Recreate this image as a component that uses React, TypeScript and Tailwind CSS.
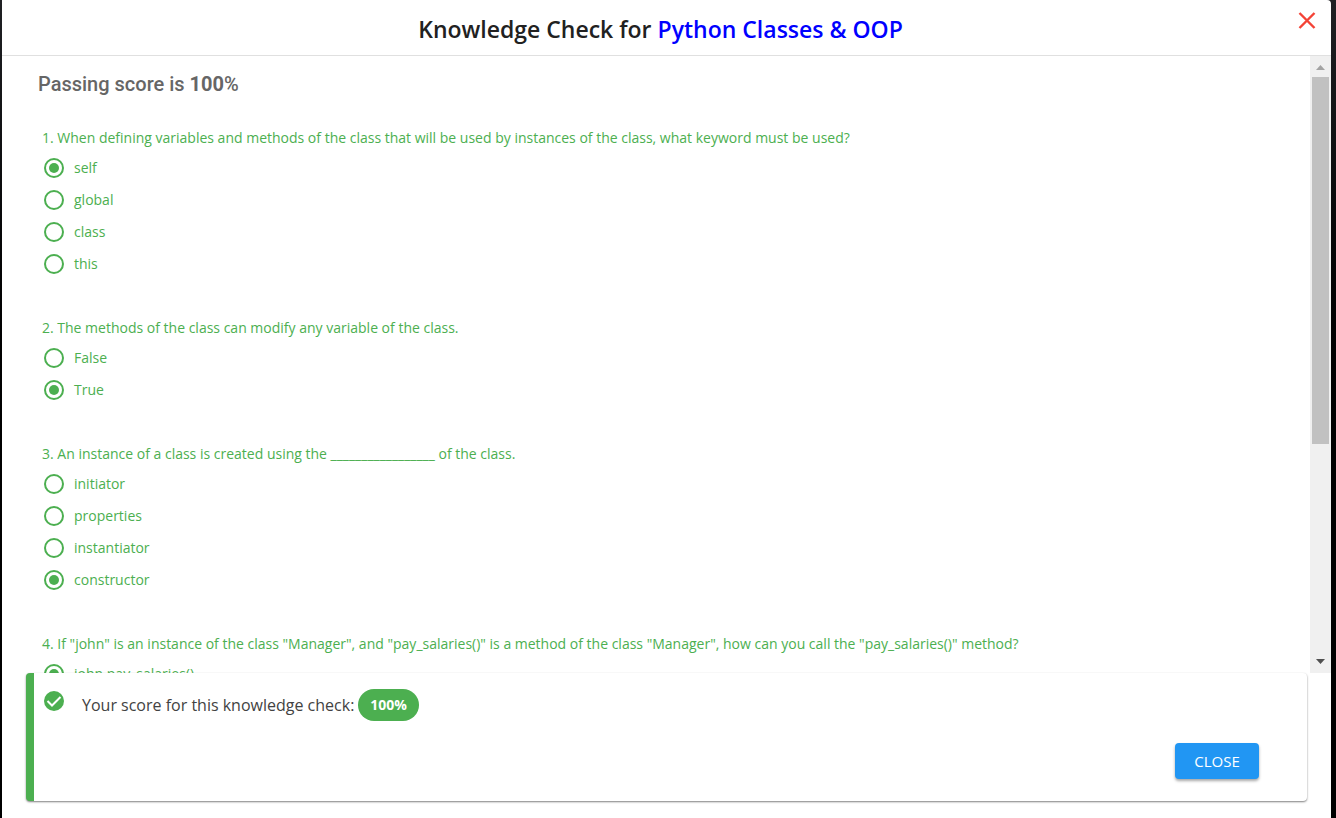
const questions = [
  {
    title:
      "1. When defining variables and methods of the class that will be used by instances of the class, what keyword must be used?",
    options: ["self", "global", "class", "this"],
    answer: 0,
  },
  {
    title: "2. The methods of the class can modify any variable of the class.",
    options: ["False", "True"],
    answer: 1,
  },
  {
    title: "3. An instance of a class is created using the _________________ of the class.",
    options: ["initiator", "properties", "instantiator", "constructor"],
    answer: 3,
  },
  {
    title:
      '4. If "john" is an instance of the class "Manager", and "pay_salaries()" is a method of the class "Manager", how can you call the "pay_salaries()" method?',
    options: ["john.pay_salaries()"],
    answer: 0,
  },
];

function Question({ index, title, options, answer }: { index: number; title: string; options: string[]; answer: number }) {
  return (
    <fieldset className="min-w-0">
      <legend className="text-sm leading-7">{title}</legend>
      {options.map((option, i) => (
        <label key={option} className="flex h-8 items-center gap-2.5 pl-0.5 text-sm">
          <input
            type="radio"
            name={`question-${index}`}
            defaultChecked={i === answer}
            className="size-5 shrink-0 appearance-none rounded-full border-2 border-[#4caf50] bg-clip-content p-[3px] checked:bg-[#4caf50]"
          />
          {option}
        </label>
      ))}
    </fieldset>
  );
}

function Scrollbar() {
  return (
    <div aria-hidden="true" className="flex w-[21px] shrink-0 flex-col items-center bg-[#f0f0f0]">
      <svg className="h-[21px] w-[21px] shrink-0" viewBox="0 0 21 21">
        <path d="M6 14 10.500 9 15 14z" fill="#a3a3a3" />
      </svg>
      <div className="flex w-[17px] flex-1 flex-col">
        <div className="flex-[367] bg-[#c1c1c1]" />
        <div className="flex-[208]" />
      </div>
      <svg className="h-[21px] w-[21px] shrink-0" viewBox="0 0 21 21">
        <path d="M6 7h9l-4.500 5z" fill="#505050" />
      </svg>
    </div>
  );
}

export default function App() {
  return (
    <div className="h-screen bg-linear-to-b from-[#202124] to-black to-60% pr-[5px] pl-0.5 font-['Open_Sans',sans-serif]">
      <main className="flex h-full flex-col rounded-tr bg-white">
        <header className="flex h-14 shrink-0 items-start border-b border-[#e0e0e0] pt-2 pr-3 pl-6">
          <h1 className="flex-1 text-center text-[23px] leading-[42px] font-semibold text-[#212121]">
            Knowledge Check for <span className="text-[#0000ff]">Python Classes &amp; OOP</span>
          </h1>
          <button type="button" aria-label="Dismiss" className="size-6 text-[#f44336]">
            <svg viewBox="0 0 24 24" className="size-6" fill="none" stroke="currentColor" strokeWidth="2.400">
              <path d="M4.500 5 19.500 20M19.500 5 4.500 20" />
            </svg>
          </button>
        </header>

        <div className="flex min-h-0 flex-1">
          <section className="min-w-0 flex-1 overflow-hidden px-9 pt-3">
            <p className="font-['Roboto',sans-serif] text-xl leading-8 font-medium text-[#666666]">
              Passing score is <b className="font-bold">100</b>%
            </p>
            <form className="mt-6 flex flex-col gap-[34px] pl-1 text-[#4caf50]">
              {questions.map((q, i) => (
                <Question key={q.title} index={i} {...q} />
              ))}
            </form>
          </section>
          <Scrollbar />
        </div>

        <footer className="shrink-0 px-6 pb-[17px]">
          <div className="flex min-h-32 flex-col justify-between rounded border-l-8 border-[#4caf50] bg-white pt-4 pr-12 pb-[22px] pl-2 shadow-[0_1px_2px_rgba(0,0,0,0.5)]">
            <div className="flex items-start">
              <svg viewBox="0 0 24 24" className="size-6 shrink-0" aria-hidden="true">
                <circle cx="12" cy="12" r="10" fill="#4caf50" />
                <path d="m5.500 12 4.500 4.500 8.500-8.500" fill="none" stroke="#fff" strokeWidth="2" />
              </svg>
              <p className="ml-4 flex items-center gap-1 text-base text-[#424242]">
                Your score for this knowledge check:
                <span className="rounded-full bg-[#4caf50] px-3 text-sm leading-8 font-bold text-white">100%</span>
              </p>
            </div>
            <button
              type="button"
              className="h-9 min-w-[84px] self-end rounded bg-[#2196f3] px-4 text-[15px] font-medium text-white shadow-[0_2px_3px_rgba(0,0,0,0.35)]"
            >
              CLOSE
            </button>
          </div>
        </footer>
      </main>
    </div>
  );
}
